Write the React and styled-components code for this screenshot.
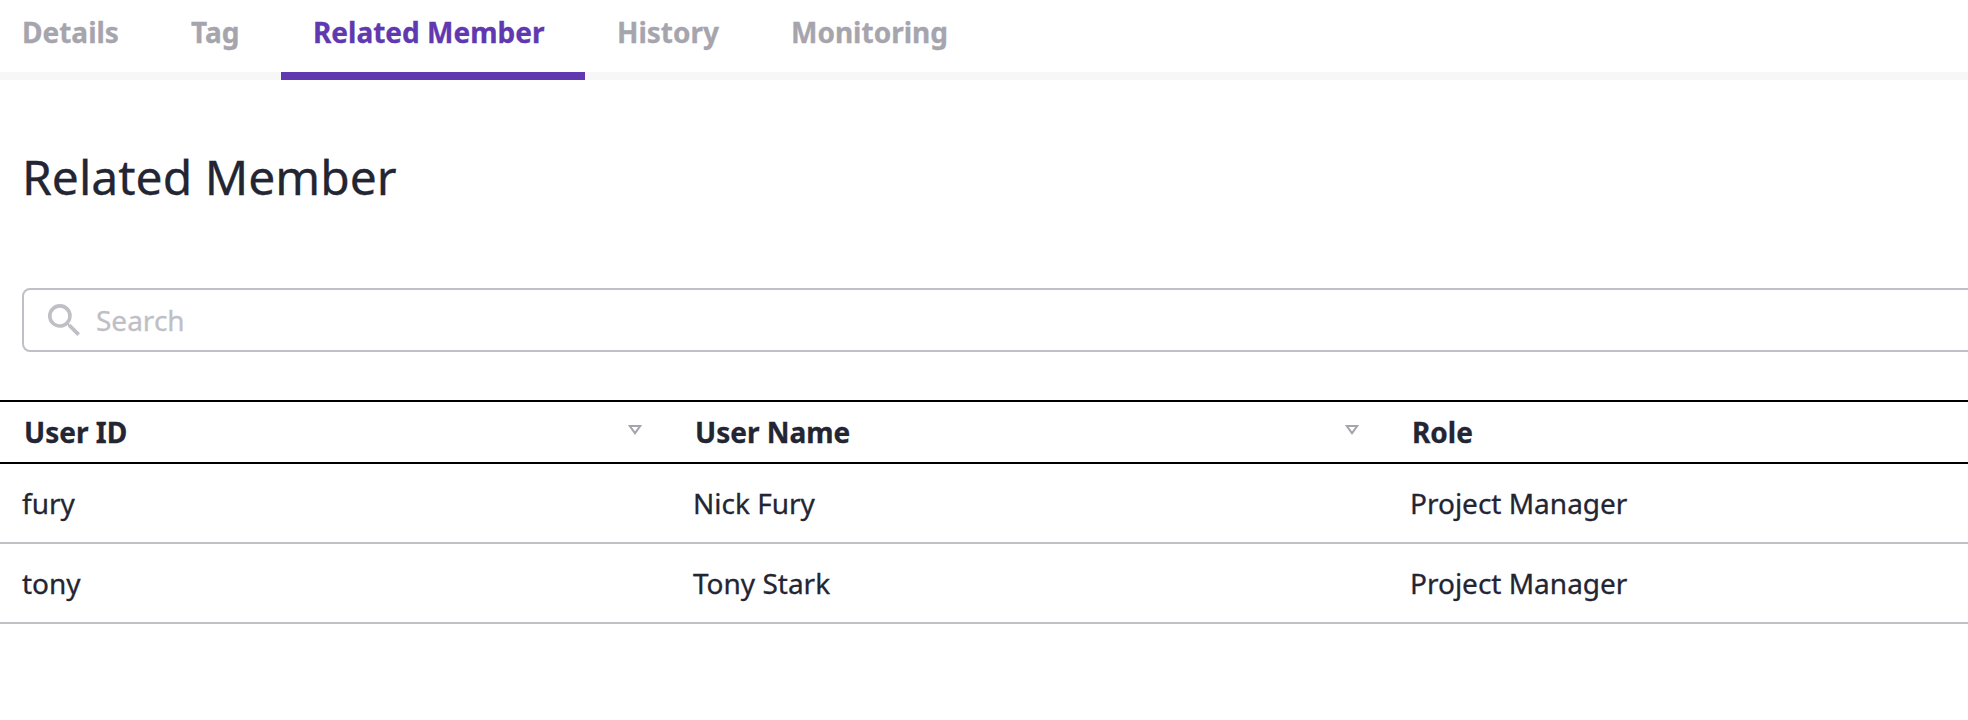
import React from "react";
import styled, { createGlobalStyle } from "styled-components";

const GlobalStyle = createGlobalStyle`
  * { box-sizing: border-box; }
  html, body { margin: 0; background: #fff; overflow: hidden; }
  body {
    font-family: "Noto Sans", sans-serif;
    font-size: 28px;
    color: #232533;
    -webkit-text-stroke: 0.3px currentColor;
  }
`;

const Page = styled.main`
  height: 720px;
  overflow: hidden;
`;

const TabBar = styled.nav`
  display: flex;
  height: 80px;
  padding-left: 22px;
  box-shadow: inset 0 -8px #f7f7f7;
`;

const Tab = styled.button`
  flex: none;
  width: ${(p) => p.$width}px;
  height: 80px;
  margin: 0;
  padding: 0 0 9px ${(p) => p.$indent || 0}px;
  border: 0;
  border-bottom: 8px solid ${(p) => (p.$active ? "#6038af" : "transparent")};
  background: none;
  color: ${(p) => (p.$active ? "#6038af" : "#a6a5ad")};
  font: 700 28px/38px "Noto Sans", sans-serif;
  text-align: left;
  white-space: nowrap;
`;

const Title = styled.h1`
  margin: 64px 0 0 22px;
  font-size: 48px;
  font-weight: 400;
  line-height: 66px;
`;

const SearchBox = styled.label`
  display: flex;
  align-items: center;
  height: 64px;
  margin: 78px -24px 48px 22px;
  padding-left: 24px;
  border: 2px solid #c0bfc6;
  border-radius: 8px;
  color: #c0bfc6;
`;

const SearchIcon = styled.svg`
  flex: none;
  width: 32px;
  height: 32px;
  margin-right: 16px;
`;

const SearchInput = styled.input`
  flex: 1;
  padding: 0;
  border: 0;
  outline: 0;
  background: none;
  font: 400 28px/38px "Noto Sans", sans-serif;
  &::placeholder { color: #c0bfc6; opacity: 1; }
`;

const Row = styled.div`
  display: grid;
  grid-template-columns: 671px 717px 1fr;
  align-items: center;
  height: 80px;
  padding-left: 22px;
  border-bottom: 2px solid #c0bfc4;
`;

const HeadRow = styled(Row)`
  height: 64px;
  border-top: 2px solid #000;
  border-bottom-color: #000;
`;

const Cell = styled.div`
  line-height: 38px;
`;

const HeadCell = styled.div`
  display: flex;
  align-items: center;
  justify-content: space-between;
  padding: 0 51px 0 2px;
  font-weight: 700;
  line-height: 38px;
`;

const SortIcon = styled.svg`
  width: 14px;
  height: 10px;
  margin-bottom: 4px;
`;

const tabs = [
  { name: "Details", width: 169 },
  { name: "Tag", width: 90 },
  { name: "Related Member", width: 304, indent: 32, active: true },
  { name: "History", width: 206, indent: 32 },
  { name: "Monitoring", width: 200 },
];

const columns = [
  { name: "User ID", sortable: true },
  { name: "User Name", sortable: true },
  { name: "Role" },
];

const members = [
  { id: "fury", name: "Nick Fury", role: "Project Manager" },
  { id: "tony", name: "Tony Stark", role: "Project Manager" },
];

export default function App() {
  return (
    <Page>
      <GlobalStyle />
      <TabBar>
        {tabs.map((t) => (
          <Tab key={t.name} $width={t.width} $indent={t.indent} $active={t.active}>
            {t.name}
          </Tab>
        ))}
      </TabBar>
      <Title>Related Member</Title>
      <SearchBox>
        <SearchIcon viewBox="3 3 17.49 17.49" fill="currentColor">
          <path d="M15.5 14h-.79l-.28-.27A6.47 6.47 0 0 0 16 9.5 6.5 6.5 0 1 0 9.5 16c1.61 0 3.09-.59 4.23-1.57l.27.28v.79l5 4.99L20.49 19l-4.99-5zm-6 0C7.01 14 5 11.99 5 9.5S7.01 5 9.5 5 14 7.01 14 9.5 11.99 14 9.5 14z" />
        </SearchIcon>
        <SearchInput placeholder="Search" />
      </SearchBox>
      <HeadRow>
        {columns.map((c) => (
          <HeadCell key={c.name}>
            {c.name}
            {c.sortable && (
              <SortIcon viewBox="0 0 14 10" fill="none" stroke="#a6a5ad" strokeWidth="2">
                <path d="M1.8 1h10.4L7 8.2z" />
              </SortIcon>
            )}
          </HeadCell>
        ))}
      </HeadRow>
      {members.map((m) => (
        <Row key={m.id}>
          <Cell>{m.id}</Cell>
          <Cell>{m.name}</Cell>
          <Cell>{m.role}</Cell>
        </Row>
      ))}
    </Page>
  );
}
